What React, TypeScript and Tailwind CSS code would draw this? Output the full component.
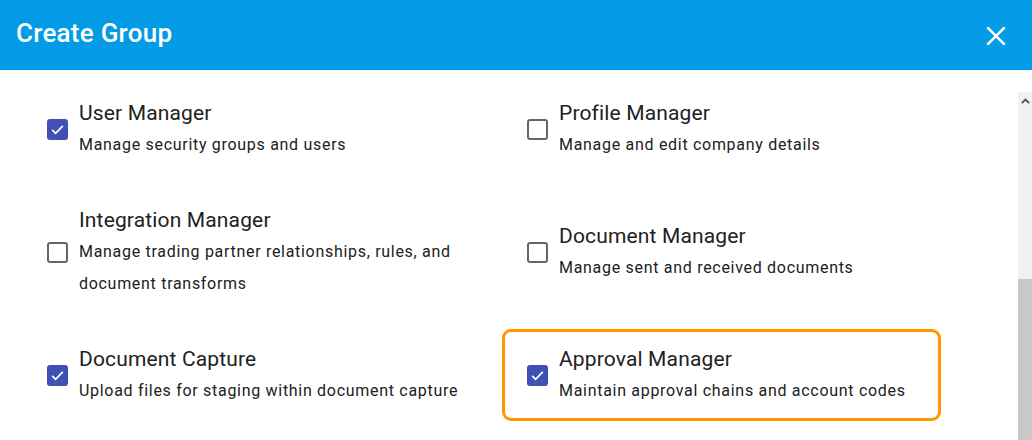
import React from "react";

type Item = { title: string; desc: string[]; checked: boolean; highlight?: boolean };

const items: Item[] = [
  { title: "User Manager", desc: ["Manage security groups and users"], checked: true },
  { title: "Profile Manager", desc: ["Manage and edit company details"], checked: false },
  {
    title: "Integration Manager",
    desc: ["Manage trading partner relationships, rules, and", "document transforms"],
    checked: false,
  },
  { title: "Document Manager", desc: ["Manage sent and received documents"], checked: false },
  { title: "Document Capture", desc: ["Upload files for staging within document capture"], checked: true },
  { title: "Approval Manager", desc: ["Maintain approval chains and account codes"], checked: true, highlight: true },
];

function Checkbox({ checked }: { checked: boolean }) {
  if (checked) {
    return (
      <div className="w-[21px] h-[21px] rounded-[3px] bg-[#3f51b5] flex items-center justify-center shrink-0">
        <svg width="17" height="17" viewBox="0 0 24 24" fill="none">
          <path d="M4.5 12.5l4.8 4.8L19.5 7" stroke="white" strokeWidth="2.5" />
        </svg>
      </div>
    );
  }
  return <div className="w-[21px] h-[21px] rounded-[3px] border-2 border-[#666666] bg-white shrink-0" />;
}

function Row({ item }: { item: Item }) {
  return (
    <div
      className={
        "flex items-center w-[439px] pl-[22px] py-[12px] rounded-[9px] border-[3px] " +
        (item.highlight ? "border-[#ff9800]" : "border-transparent")
      }
    >
      <Checkbox checked={item.checked} />
      <div className="ml-[11px] text-[#212121] whitespace-nowrap">
        <div className="text-[21px] leading-[30px] tracking-[0.15px]">{item.title}</div>
        {item.desc.map((d, i) => (
          <div key={i} className="text-[16px] leading-[32px] tracking-[0.7px] pt-[1px] -mb-[1px]">
            {d}
          </div>
        ))}
      </div>
    </div>
  );
}

export default function App() {
  return (
    <div className="w-[1032px] h-[440px] overflow-hidden bg-white flex flex-col" style={{ fontFamily: "Roboto, sans-serif" }}>
      <div className="h-[70px] bg-[#039be5] flex items-center justify-between pl-[16px] pr-[20px] shrink-0">
        <div className="text-white text-[26px] font-medium tracking-[0.25px] mb-[3px]">Create Group</div>
        <svg width="32" height="32" viewBox="0 0 24 24" className="mt-[1px]">
          <path d="M5.5 5.5l13 13M18.5 5.5l-13 13" stroke="white" strokeWidth="1.9" />
        </svg>
      </div>
      <div className="flex flex-1 min-h-0">
        <div className="flex-1 pt-[13px] pl-[22px]">
          <div className="grid grid-cols-[480px_480px] gap-y-[15px] items-center">
            {items.map((it, i) => (
              <Row key={i} item={it} />
            ))}
          </div>
        </div>
        <div className="w-[14px] mt-[22px] bg-[#f1f1f1] flex flex-col shrink-0">
          <div className="h-[17px] flex items-center justify-center">
            <svg width="9" height="6" viewBox="0 0 9 6">
              <path d="M0.8 5.2L4.5 1.5l3.7 3.7" stroke="#505050" strokeWidth="1.8" fill="none" />
            </svg>
          </div>
          <div className="h-[170px]" />
          <div className="flex-1 bg-[#c8c8c8]" />
        </div>
      </div>
    </div>
  );
}
